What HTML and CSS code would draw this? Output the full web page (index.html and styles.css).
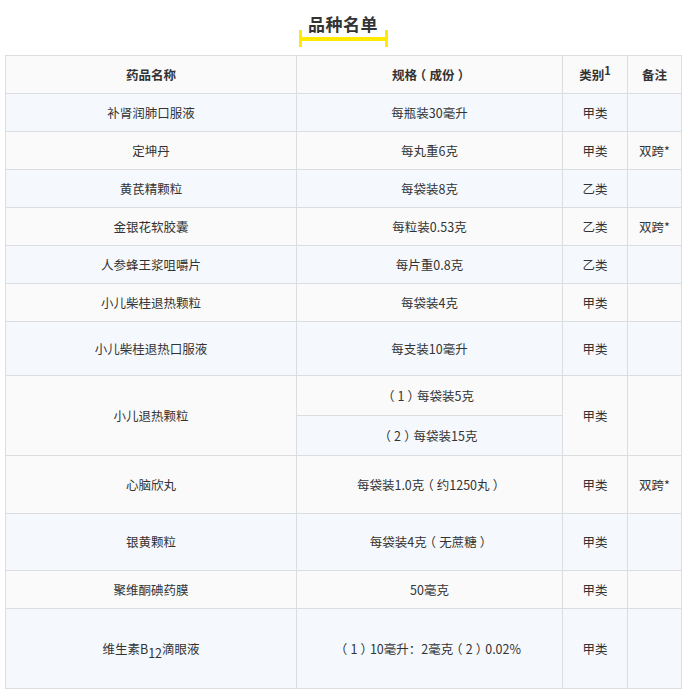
FILE: index.html
```html
<!DOCTYPE html>
<html lang="zh">
<head>
<meta charset="utf-8">
<link rel="stylesheet" href="styles.css">
</head>
<body>
<div class="page">
  <div class="title-wrap"><h2 class="title">品种名单</h2></div>
  <table class="list">
    <colgroup>
      <col class="c1"><col class="c2"><col class="c3"><col class="c4">
    </colgroup>
    <thead>
      <tr class="r38"><th>药品名称</th><th>规格<span class="fp">（</span>成份<span class="fp">）</span></th><th>类别<sup>1</sup></th><th>备注</th></tr>
    </thead>
    <tbody>
      <tr class="r38 blue"><td>补肾润肺口服液</td><td>每瓶装30毫升</td><td>甲类</td><td></td></tr>
      <tr class="r38 grey"><td>定坤丹</td><td>每丸重6克</td><td>甲类</td><td>双跨*</td></tr>
      <tr class="r38 blue"><td>黄芪精颗粒</td><td>每袋装8克</td><td>乙类</td><td></td></tr>
      <tr class="r38 grey"><td>金银花软胶囊</td><td>每粒装0.53克</td><td>乙类</td><td>双跨*</td></tr>
      <tr class="r38 blue"><td>人参蜂王浆咀嚼片</td><td>每片重0.8克</td><td>乙类</td><td></td></tr>
      <tr class="r38 grey"><td>小儿柴桂退热颗粒</td><td>每袋装4克</td><td>甲类</td><td></td></tr>
      <tr class="r54 blue"><td>小儿柴桂退热口服液</td><td>每支装10毫升</td><td>甲类</td><td></td></tr>
      <tr class="r40 grey"><td rowspan="2">小儿退热颗粒</td><td><span class="fp">（</span>1<span class="fp">）</span>每袋装5克</td><td rowspan="2">甲类</td><td rowspan="2"></td></tr>
      <tr class="r40 blue"><td><span class="fp">（</span>2<span class="fp">）</span>每袋装15克</td></tr>
      <tr class="r58 grey"><td>心脑欣丸</td><td>每袋装1.0克<span class="fp">（</span>约1250丸<span class="fp">）</span></td><td>甲类</td><td>双跨*</td></tr>
      <tr class="r57 blue"><td>银黄颗粒</td><td>每袋装4克<span class="fp">（</span>无蔗糖<span class="fp">）</span></td><td>甲类</td><td></td></tr>
      <tr class="r38 grey"><td>聚维酮碘药膜</td><td>50毫克</td><td>甲类</td><td></td></tr>
      <tr class="r80 blue"><td>维生素B<sub>12</sub>滴眼液</td><td><span class="fp">（</span>1<span class="fp">）</span>10毫升：2毫克<span class="fp">（</span>2<span class="fp">）</span>0.02%</td><td>甲类</td><td></td></tr>
    </tbody>
  </table>
</div>
</body>
</html>
```

FILE: styles.css
```css
html, body {
  margin: 0;
  padding: 0;
  background: #ffffff;
}

.page {
  padding: 0 9px 0 5px;
  font-family: "Noto Sans CJK SC", "Noto Sans", sans-serif;
  color: #333333;
}

.title-wrap {
  display: flex;
  justify-content: center;
  height: 55px;
  box-sizing: border-box;
  padding-top: 12px;
}

.title {
  position: relative;
  margin: 0;
  font-size: 17px;
  font-weight: 700;
  line-height: 24px;
  height: 24px;
  letter-spacing: 0.5px;
  color: #333333;
}

.title::after {
  content: "";
  position: absolute;
  left: -9px;
  right: -10px;
  top: 18px;
  height: 17px;
  border-left: 3px solid #ffea00;
  border-right: 3px solid #ffea00;
  background: linear-gradient(#ffea00, #ffea00) center / 100% 4px no-repeat;
}

.list {
  width: 676px;
  border-collapse: collapse;
  table-layout: fixed;
  font-size: 12.5px;
}

.c1 { width: 291px; }
.c2 { width: 266px; }
.c3 { width: 65px; }
.c4 { width: 54px; }

.list th,
.list td {
  border: 1px solid #dcdde0;
  padding: 0 6px;
  text-align: center;
  vertical-align: middle;
  line-height: 18px;
}

.list th {
  font-weight: 700;
  background: #fafafa;
  color: #333333;
}

.fp {
  display: inline-block;
  width: 1em;
  text-align: center;
  font-feature-settings: "halt" 1;
}

.list sup {
  font-size: 11px;
  line-height: 0;
  vertical-align: 5px;
}

.list sub {
  font-size: 12.5px;
  line-height: 0;
  vertical-align: -4px;
}

.blue td { background: #f5f9fe; }
.grey td { background: #fafafa; }

.r38 { height: 38px; }
.r40 { height: 40px; }
.r54 { height: 54px; }
.r57 { height: 57px; }
.r58 { height: 58px; }
.r80 { height: 80px; }
```
